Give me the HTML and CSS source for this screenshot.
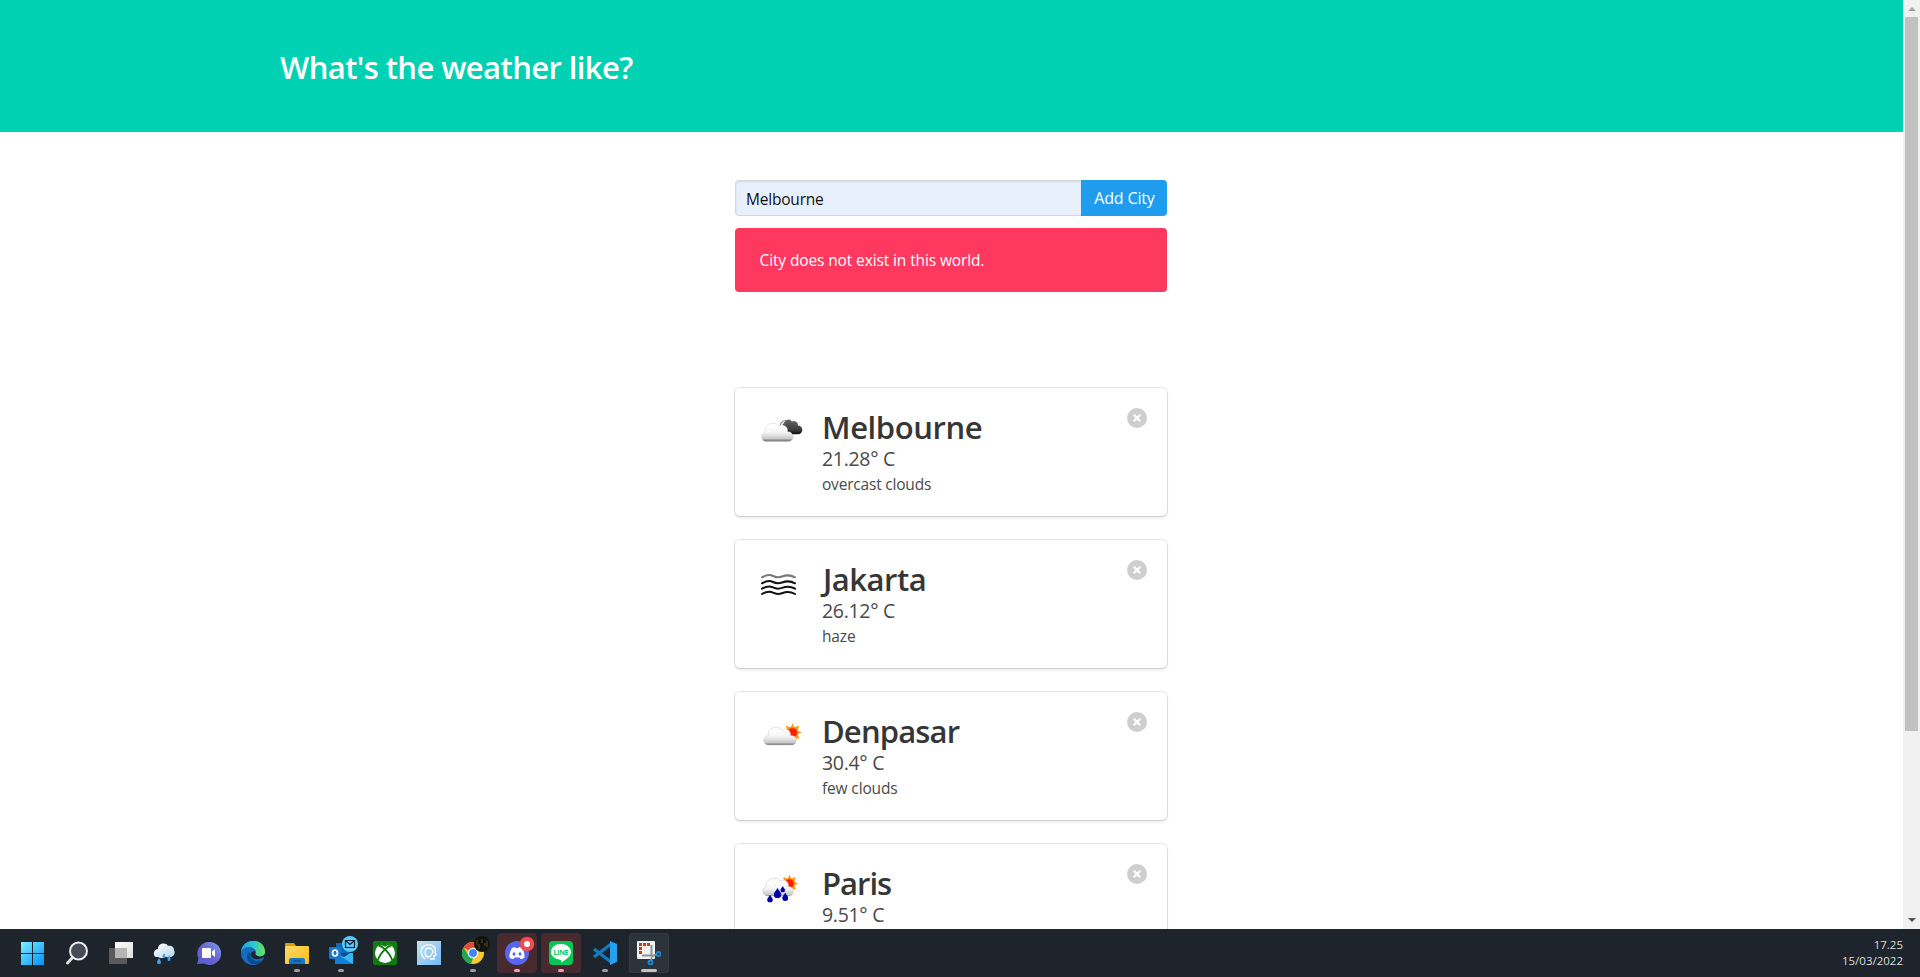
FILE: index.html
```html
<!DOCTYPE html>
<html lang="en">
<head>
<meta charset="utf-8">
<title>What's the weather like?</title>
<link rel="stylesheet" href="styles.css">
</head>
<body>
<svg class="defs" width="0" height="0">
  <defs>
    <linearGradient id="cloud" gradientUnits="userSpaceOnUse" x1="0" y1="13" x2="0" y2="33.5"><stop offset="0" stop-color="#f4f4f4"/><stop offset=".2" stop-color="#fff"/><stop offset=".55" stop-color="#f6f6f6"/><stop offset=".86" stop-color="#c9c9c9"/><stop offset=".93" stop-color="#8c8c8c"/><stop offset="1" stop-color="#777"/></linearGradient>
    <linearGradient id="dark" x1="0" y1="0" x2="0" y2="1"><stop offset="0" stop-color="#666"/><stop offset=".7" stop-color="#3c3c3c"/><stop offset="1" stop-color="#111"/></linearGradient>
    <linearGradient id="win" x1="0" y1="0" x2="1" y2="1"><stop offset="0" stop-color="#7df0ff"/><stop offset="1" stop-color="#0091fb"/></linearGradient>
    <linearGradient id="folder" x1="0" y1="0" x2="1" y2="1"><stop offset="0" stop-color="#ffdc6b"/><stop offset="1" stop-color="#fdb813"/></linearGradient>
    <linearGradient id="chat" x1="1" y1="0" x2="0" y2="1"><stop offset="0" stop-color="#7b9cf0"/><stop offset=".5" stop-color="#6765cc"/><stop offset="1" stop-color="#5b5bd6"/></linearGradient>
    <linearGradient id="edge" x1="0" y1=".3" x2="1" y2=".4"><stop offset="0" stop-color="#1ba1e6"/><stop offset=".5" stop-color="#2cc5d4"/><stop offset="1" stop-color="#65e358"/></linearGradient>
    <linearGradient id="face" x1="0" y1="0" x2="1" y2="1"><stop offset="0" stop-color="#c5e6e8"/><stop offset="1" stop-color="#73b6f5"/></linearGradient>
    <linearGradient id="pane" x1="0" y1="0" x2="1" y2="1"><stop offset="0" stop-color="#fff"/><stop offset="1" stop-color="#ddd"/></linearGradient>
    <linearGradient id="raincloud" x1="0" y1="0" x2="1" y2="1"><stop offset="0" stop-color="#fff"/><stop offset="1" stop-color="#b7d5ee"/></linearGradient>
    <symbol id="sun" viewBox="-10 -10 20 20"><path fill="#ff9d12" d="M0-10 1.800-5.500 7-7 5.500-1.800 10 0 5.500 1.800 7 7 1.800 5.500 0 10-1.800 5.500-7 7-5.500 1.800-10 0-5.500-1.800-7-7-1.800-5.500z"/><circle r="5.600" fill="#ff7a00"/><circle r="4.600" fill="#ff1d00"/></symbol>
    <symbol id="drop" viewBox="0 0 6 8"><path d="M3 0C4 2.500 5.800 3.500 5.800 5.200A2.800 2.800 0 0 1 .2 5.200C.2 3.500 2 2.500 3 0z" fill="#0000a8"/></symbol>
    <symbol id="cross" viewBox="0 0 20 20"><circle cx="10" cy="10" r="10" fill="#cecece"/><path d="M6.700 6.700l6.600 6.600M13.300 6.700l-6.600 6.600" stroke="#fff" stroke-width="2.200"/></symbol>
  </defs>
</svg>
<div class="desktop">
  <div class="browser">
    <div class="page">
      <header class="hero"><h1 class="title hero-title">What's the weather like?</h1></header>
      <main class="content">
        <form class="search">
          <div class="input">Melbourne</div>
          <div class="button">Add City</div>
        </form>
        <div class="notice">City does not exist in this world.</div>
        <section class="cards">
          <article class="card">
            <svg class="weather" viewBox="0 0 50 50"><path fill="url(#dark)" d="M22 19.500a3.500 3.500 0 0 1 1-4.500 4.500 4.500 0 0 1 8-1.500 4.200 4.200 0 0 1 6 4 4 4 0 0 1 0 8.700H27q-3-1-5-6.700z"/><path d="M19 18.500q1-6 6-6" fill="none" stroke="#888" stroke-width="1.200"/><path fill="url(#cloud)" stroke="#bbb" stroke-width=".3" d="M4.500 33.500a4.800 4.800 0 0 1-.5-9.300A8 8 0 0 1 18 18a5.500 5.500 0 0 1 8.500 5.800 4.900 4.900 0 0 1 1.500 9.700z"/></svg>
            <div class="info"><h2 class="title melbourne">Melbourne</h2><p class="temp">21.28° C</p><p class="desc overcast">overcast clouds</p></div>
            <svg class="close"><use href="#cross"/></svg>
          </article>
          <article class="card">
            <svg class="weather" viewBox="0 0 50 50" fill="none" stroke="#111" stroke-width="2" stroke-linecap="round"><path stroke="#777" d="M1 17.300C6 14.500 9 14.500 12 16S17 18 21 16.500 29 14.500 34 17.300"/><path d="M1 23.300C6 20.500 9 20.500 12 22S17 24 21 22.500 29 20.500 34 23.300M1 28.700C6 25.900 9 25.900 12 27.400S17 29.400 21 27.900 29 25.900 34 28.700M1 34C6 31.200 9 31.200 12 32.700S17 34.700 21 33.200 29 31.200 34 34"/></svg>
            <div class="info"><h2 class="title jakarta">Jakarta</h2><p class="temp">26.12° C</p><p class="desc">haze</p></div>
            <svg class="close"><use href="#cross"/></svg>
          </article>
          <article class="card">
            <svg class="weather" viewBox="0 0 50 50"><use href="#sun" x="22" y="11" width="19" height="19"/><path fill="url(#cloud)" stroke="#bbb" stroke-width=".4" d="M7.500 33a4.600 4.600 0 0 1-.3-9.200A7.800 7.800 0 0 1 21 18a5.500 5.500 0 0 1 8.500 5.500A4.800 4.800 0 0 1 31.500 33z"/></svg>
            <div class="info"><h2 class="title denpasar">Denpasar</h2><p class="temp">30.4° C</p><p class="desc">few clouds</p></div>
            <svg class="close"><use href="#cross"/></svg>
          </article>
          <article class="card">
            <svg class="weather" viewBox="0 0 50 50"><use href="#sun" x="19.500" y="10.500" width="18" height="18"/><path fill="url(#cloud)" stroke="#bbb" stroke-width=".4" d="M5.500 32a4.800 4.800 0 0 1-.3-9.200A7.800 7.800 0 0 1 19 17a5.500 5.500 0 0 1 8.500 5.500A4.800 4.800 0 0 1 28.500 32z"/><use href="#drop" x="12.500" y="23.500" width="8" height="11"/><use href="#drop" x="19" y="22" width="5.500" height="6.500"/><use href="#drop" x="6" y="30.500" width="6" height="8"/><use href="#drop" x="21" y="28.500" width="6.500" height="8.500"/></svg>
            <div class="info"><h2 class="title paris">Paris</h2><p class="temp">9.51° C</p></div>
            <svg class="close"><use href="#cross"/></svg>
          </article>
        </section>
      </main>
    </div>
    <aside class="scrollbar"><i class="arrow up"></i><div class="thumb"></div><i class="arrow down"></i></aside>
  </div>
  <footer class="taskbar">
    <nav class="apps">
      <div class="app"><svg viewBox="0 0 24 24"><path fill="url(#win)" d="M0 1h11v11H0zM12 1h11v11H12zM0 13h11v11H0zM12 13h11v11H12z"/></svg></div>
      <div class="app"><svg viewBox="0 0 24 24"><path d="M8 16l-5.500 6" stroke="#ddd" stroke-width="3" stroke-linecap="round"/><circle cx="13.500" cy="10" r="8.500" fill="#444c54" stroke="#eee" stroke-width="2"/></svg></div>
      <div class="app"><svg viewBox="0 0 24 24"><path fill="#5a5a5a" d="M0 7h18v16H0z"/><path fill="url(#pane)" d="M6 1h18v16H6z"/><path fill="#b5b5b5" d="M6 7h12v10H6z"/></svg></div>
      <div class="app"><svg viewBox="0 0 24 24"><path fill="url(#raincloud)" d="M5 16C-1 17 0 8 5 8 5 2 13 1 15 5c4-1 6 2 6 4 2 4-1 7-4 7-2 1-4 0-5 0-3 2-5 1-7 0z"/><g fill="#3d9fee"><path d="M11 12q3 5 0 5t0-5zM6 17q4 6 0 6t0-6zM16 14q3 6 0 6t0-6z"/></g></svg></div>
      <div class="app"><svg viewBox="0 0 24 24"><path fill="url(#chat)" d="M12 1A11.500 11.500 0 1 1 7 22.500L0 23l1.500-5.500A11.500 11.500 0 0 1 12 1z"/><rect x="5" y="7" width="9" height="10" rx="1" fill="#fff"/><path fill="#fff" d="M15 10.500 18 8v8l-3-2.500z"/></svg></div>
      <div class="app"><svg viewBox="0 0 24 24"><circle cx="12" cy="12" r="12" fill="#176bbf"/><path fill="url(#edge)" d="M0 11C1-4 24-4 24 11c0 5-6 6-9 4-2-1 0-2 0-4C14 5 3 4 0 11z"/><path fill="#0b4a8f" d="M9 11c-2 7 5 11 12 8-4 6-14 6-15-3 0-3 1-4 3-5z"/><path fill="#1d242c" d="M14 10c-3 0-5 2-4 5 2 4 8 4 13 1l1 1v-4c-2 3-7 3-9 1-2-1 0-2-1-4z"/></svg></div>
      <div class="app"><svg viewBox="0 0 24 24"><path fill="#dd9d0b" d="M0 5V3q0-1 1-1h8l2 3z"/><rect y="5" width="24" height="18" rx="1" fill="url(#folder)"/><path fill="#1476c6" d="M4 23v-4q0-2 2-2h12q2 0 2 2v4z"/><path d="M8 20h8" stroke="#0b4276"/></svg><b class="run"></b></div>
      <div class="app"><svg viewBox="0 0 24 24"><path fill="#1066b5" d="M7 2h14v11H7z"/><path fill="#37b6f5" d="M6 12l18 0v11H6z"/><path fill="#1180d8" d="M6 12l18 11H6z"/><path fill="#0a4b92" d="M7 12h14l-6 4z"/><rect y="6" width="12" height="12" rx="1" fill="#1678d1"/><ellipse cx="6" cy="12" rx="2.500" ry="3" fill="none" stroke="#fff" stroke-width="1.700"/></svg><svg class="badge mail" viewBox="0 0 16 16"><circle cx="8" cy="8" r="8" fill="#5ac8fa"/><path d="M3.500 4.500h9v7h-9zl4.500 4 4.500-4" fill="none" stroke="#16202c" stroke-width="1.200"/></svg><b class="run"></b></div>
      <div class="app"><svg viewBox="0 0 24 24"><rect width="24" height="24" rx="2" fill="#107c10"/><circle cx="12" cy="12" r="10" fill="#fff"/><path d="M6 3.500q3 .3 6 2.300 3-2 6-2.300L12 1z" fill="#107c10"/><path d="M4.500 20C6 15.500 9 11 12 8.500c3 2.500 6 7 7.500 11.500M5.500 4.500Q9 5 12 8.500 15 5 18.500 4.500" fill="none" stroke="#107c10" stroke-width="1.800"/></svg></div>
      <div class="app"><svg viewBox="0 0 24 24"><path fill="url(#face)" d="M0 0h24v24H0z"/><g fill="none" stroke="#fff" stroke-width="1.300"><path d="M8 18C4 15 3 9 6 6c5-5 14-1 12 5l1 3-2 1v3h-4"/><path d="M9 16c-2-8 0-9 3-9s5 3 3 6-4 4-6 1M10 17l4-2"/></g></svg></div>
      <div class="app"><svg viewBox="0 0 24 24"><circle cx="12" cy="12" r="11" fill="#fbc82e"/><path fill="#e24a3d" d="M12 12 2.500 6.500A11 11 0 0 1 21.500 6.500L12 7z"/><path fill="#23a455" d="M2.500 6.500 8 15l4 2-2 6A11 11 0 0 1 2.500 6.500z"/><circle cx="12" cy="12" r="5.200" fill="#fff"/><circle cx="12" cy="12" r="4" fill="#4285f4"/></svg><svg class="badge avatar" viewBox="0 0 16 16"><circle cx="8" cy="8" r="8" fill="#13130d"/><path d="M3 4v5M5 8v5M8 3v4M11 7v3M13 5v6" stroke="#5b4d22"/></svg><b class="run"></b></div>
      <div class="app alert"><svg viewBox="0 0 24 24"><circle cx="12" cy="12" r="12" fill="#5865f2"/><path fill="#fff" d="M7 7l3-1 .500 1h3l.500-1 3 1q3 5 2.500 9.500-2 1.500-4 1.500l-1-1.500h-5L8.500 18q-2 0-4-1.500Q4 12 7 7z"/><ellipse cx="9" cy="13" rx="1.500" ry="1.700" fill="#5865f2"/><ellipse cx="15" cy="13" rx="1.500" ry="1.700" fill="#5865f2"/></svg><svg class="badge dot" viewBox="0 0 16 16"><circle cx="8" cy="8" r="7.300" fill="#ed4e50"/><circle cx="8" cy="8" r="3" fill="#fff"/></svg><b class="run"></b></div>
      <div class="app alert"><svg viewBox="0 0 24 24"><rect width="24" height="24" rx="4" fill="#06c755"/><path fill="#fff" d="M12 3c5.500 0 10 3.500 10 8 0 4-4 7-10 10.500.500-2 0-2.500-1-2.800C5.500 18 2 15 2 11c0-4.500 4.500-8 10-8z"/><text x="4.500" y="13.800" class="line-word" textLength="15">LINE</text></svg><b class="run"></b></div>
      <div class="app"><svg viewBox="0 0 24 24"><path d="M1 8 18 21M1 16 18 3" stroke="#147bc1" stroke-width="3.300"/><path fill="#27a0ed" d="M17 0l7 3v18l-7 3z"/></svg><b class="run"></b></div>
      <div class="app active"><svg viewBox="0 0 24 24"><rect width="18" height="18" rx="1" fill="#f3f3f3"/><path fill="#d83b01" d="M2 2h3v3H2zM6 2h3v3H6zM10 2h3v3h-3zM2 6h3v3H2zM2 10h3v3H2z"/><path d="M14.500 4v10.500M5 14.500h13" stroke="#8c9398" stroke-width="2"/><g fill="none" stroke="#168bd6" stroke-width="1.800"><circle cx="21.500" cy="13" r="2"/><circle cx="13.500" cy="21.500" r="2"/></g><path d="M15 15l4.500-1.500M15 15l-1 4.500" fill="none" stroke="#8c9398" stroke-width="1.500"/></svg><b class="run"></b></div>
    </nav>
    <div class="clock"><span>17.25</span><span>15/03/2022</span></div>
  </footer>
</div>
</body>
</html>
```
FILE: styles.css
```css
* { box-sizing: border-box; }
body { margin: 0; font-family: "Open Sans", "Noto Sans", sans-serif; font-size: 16px; color: #4a4a4a; overflow: hidden; }
h1, h2, p { margin: 0; }
svg { display: block; flex: none; }
.defs { position: absolute; }
.desktop { height: 977px; display: flex; flex-direction: column; }
.browser { height: 929px; display: flex; overflow: hidden; background: #fff; }
.page { flex: 1; }
.hero { height: 132px; padding: 48px 280px; background: #00d1b2; }
.title { font-size: 31px; line-height: 36px; font-weight: 600; color: #363636; white-space: nowrap; }
.hero-title { color: #fff; line-height: 38px; letter-spacing: -.6px; }
.melbourne { letter-spacing: -.4px; }
.jakarta { letter-spacing: -.5px; padding-left: 1px; }
.denpasar { letter-spacing: -.85px; }
.paris { letter-spacing: -1px; }
.content { width: 432px; margin: 48px auto 0 735px; }
.search { display: flex; height: 36px; }
.input { flex: 1; border: 1px solid #d4d8dd; border-right: 0; border-radius: 4px 0 0 4px; background: #e8f0fe; box-shadow: inset 0 1px 2px rgba(10,10,10,.1); padding: 0 10px; line-height: 36px; color: #111; font-size: 15.500px; letter-spacing: -.2px; }
.button { width: 86px; background: #209cee; color: #fff; border-radius: 0 4px 4px 0; text-align: center; line-height: 36px; letter-spacing: -.15px; padding-left: 1px; }
.notice { height: 64px; margin-top: 12px; padding: 0 24.500px; background: #ff3860; color: #fff; border-radius: 4px; line-height: 65px; font-size: 15.500px; letter-spacing: -.12px; }
.cards { margin-top: 96px; display: flex; flex-direction: column; gap: 24px; }
.card { height: 128px; padding: 20px; display: flex; border-radius: 5px; box-shadow: 0 2px 3px rgba(10,10,10,.1), 0 0 0 1px rgba(10,10,10,.1); }
.weather { width: 50px; height: 50px; margin: 0 11px 0 6px; }
.info { flex: 1; padding-top: 1px; }
.temp { font-size: 19.500px; line-height: 27px; letter-spacing: -.3px; }
.desc { font-size: 15.500px; line-height: 24px; letter-spacing: -.15px; }
.overcast { letter-spacing: -.2px; }
.close { width: 20px; height: 20px; }
.scrollbar { width: 17px; background: #f1f1f1; display: flex; flex-direction: column; align-items: center; }
.thumb { width: 13px; height: 714px; background: #c1c1c1; margin-top: 6px; }
.arrow { width: 0; height: 0; border: 4px solid transparent; border-top-width: 0; border-bottom-width: 4px; }
.up { border-bottom-color: #a3a3a3; margin-top: 7px; }
.down { border-top: 4px solid #505050; border-bottom: 0; margin: auto 0 7px; }
.taskbar { height: 48px; background: #1d242c; display: flex; justify-content: space-between; padding: 4px 17px 4px 13px; }
.apps { display: flex; gap: 4px; }
.app { width: 40px; height: 40px; padding: 8px; position: relative; border-radius: 4px; }
.app > svg:first-child { width: 24px; height: 24px; }
.alert { background: #462a2d; }
.active { background: #2d333a; box-shadow: inset 0 0 0 1px #353b41; }
.run { position: absolute; left: 17px; bottom: 1px; width: 6px; height: 3px; border-radius: 2px; background: #999da0; }
.alert .run { background: #ff99a4; }
.active .run { left: 12px; width: 16px; background: #c0c0c0; }
.badge { position: absolute; width: 16px; height: 16px; top: 3px; left: 21px; }
.dot { left: 22px; }
.line-word { font: 700 7px "Open Sans", sans-serif; fill: #06c755; }
.clock { display: flex; flex-direction: column; align-items: flex-end; color: #dcdcdc; font-size: 11.500px; line-height: 16px; padding-top: 4px; }
```
